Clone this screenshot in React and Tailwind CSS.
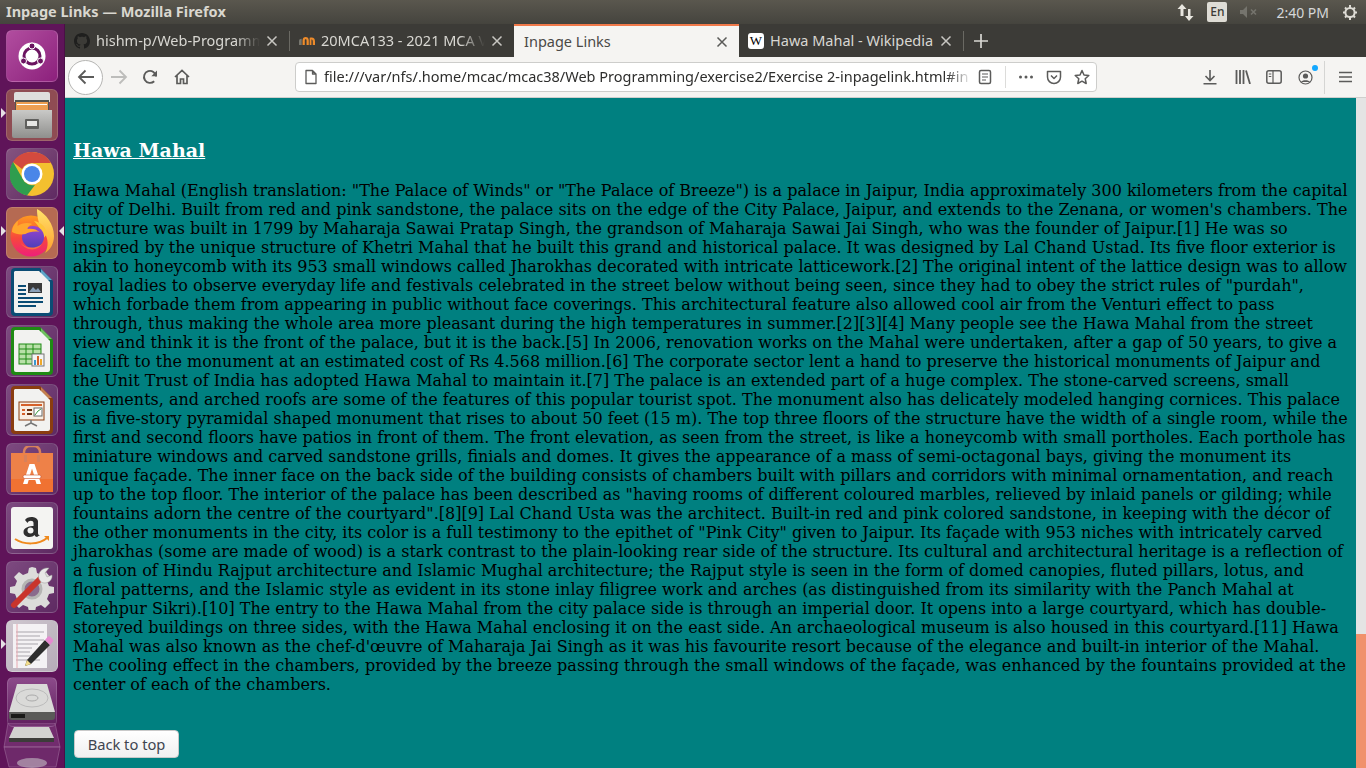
const UI = "font-['Noto_Sans',sans-serif]";

const TEXT = `Hawa Mahal (English translation: "The Palace of Winds" or "The Palace of Breeze") is a palace in Jaipur, India approximately 300 kilometers from the capital city of Delhi. Built from red and pink sandstone, the palace sits on the edge of the City Palace, Jaipur, and extends to the Zenana, or women's chambers. The structure was built in 1799 by Maharaja Sawai Pratap Singh, the grandson of Maharaja Sawai Jai Singh, who was the founder of Jaipur.[1] He was so inspired by the unique structure of Khetri Mahal that he built this grand and historical palace. It was designed by Lal Chand Ustad. Its five floor exterior is akin to honeycomb with its 953 small windows called Jharokhas decorated with intricate latticework.[2] The original intent of the lattice design was to allow royal ladies to observe everyday life and festivals celebrated in the street below without being seen, since they had to obey the strict rules of "purdah", which forbade them from appearing in public without face coverings. This architectural feature also allowed cool air from the Venturi effect to pass through, thus making the whole area more pleasant during the high temperatures in summer.[2][3][4] Many people see the Hawa Mahal from the street view and think it is the front of the palace, but it is the back.[5] In 2006, renovation works on the Mahal were undertaken, after a gap of 50 years, to give a facelift to the monument at an estimated cost of Rs 4.568 million.[6] The corporate sector lent a hand to preserve the historical monuments of Jaipur and the Unit Trust of India has adopted Hawa Mahal to maintain it.[7] The palace is an extended part of a huge complex. The stone-carved screens, small casements, and arched roofs are some of the features of this popular tourist spot. The monument also has delicately modeled hanging cornices. This palace is a five-story pyramidal shaped monument that rises to about 50 feet (15 m). The top three floors of the structure have the width of a single room, while the first and second floors have patios in front of them. The front elevation, as seen from the street, is like a honeycomb with small portholes. Each porthole has miniature windows and carved sandstone grills, finials and domes. It gives the appearance of a mass of semi-octagonal bays, giving the monument its unique façade. The inner face on the back side of the building consists of chambers built with pillars and corridors with minimal ornamentation, and reach up to the top floor. The interior of the palace has been described as "having rooms of different coloured marbles, relieved by inlaid panels or gilding; while fountains adorn the centre of the courtyard".[8][9] Lal Chand Usta was the architect. Built-in red and pink colored sandstone, in keeping with the décor of the other monuments in the city, its color is a full testimony to the epithet of "Pink City" given to Jaipur. Its façade with 953 niches with intricately carved jharokhas (some are made of wood) is a stark contrast to the plain-looking rear side of the structure. Its cultural and architectural heritage is a reflection of a fusion of Hindu Rajput architecture and Islamic Mughal architecture; the Rajput style is seen in the form of domed canopies, fluted pillars, lotus, and floral patterns, and the Islamic style as evident in its stone inlay filigree work and arches (as distinguished from its similarity with the Panch Mahal at Fatehpur Sikri).[10] The entry to the Hawa Mahal from the city palace side is through an imperial door. It opens into a large courtyard, which has double-storeyed buildings on three sides, with the Hawa Mahal enclosing it on the east side. An archaeological museum is also housed in this courtyard.[11] Hawa Mahal was also known as the chef-d'œuvre of Maharaja Jai Singh as it was his favourite resort because of the elegance and built-in interior of the Mahal. The cooling effect in the chambers, provided by the breeze passing through the small windows of the façade, was enhanced by the fountains provided at the center of each of the chambers.`;

const Close = ({ c = "#c8c7c2" }) => (
  <svg width="12" height="12" viewBox="0 0 12 12" className="shrink-0">
    <path d="M1.500 1.500l9 9M10.500 1.500l-9 9" stroke={c} strokeWidth="1.500" />
  </svg>
);

function Tab({ icon, title, active, fade }) {
  return (
    <div className={active
      ? "w-[225px] h-[33px] flex items-center pl-[10px] pr-[11px] bg-[#f5f4f2] border-t-2 border-[#f0794a] shrink-0"
      : "w-[224px] h-[33px] flex items-center pl-[9px] pr-[11px] shrink-0"}>
      {icon}
      <span className={`flex-1 whitespace-nowrap overflow-hidden text-[14.5px] ${active ? "text-[#4a4946]" : "text-[#d8d7d2]"} ${fade ? "[mask-image:linear-gradient(to_right,black_85%,transparent)]" : ""}`}>{title}</span>
      <span className="ml-[6px]"><Close c={active ? "#5a5a58" : "#c8c7c2"} /></span>
    </div>
  );
}

const Sep = () => <div className="w-px h-[20px] bg-[#6a6963] shrink-0" />;

const Github = () => (
  <svg width="16" height="16" viewBox="0 0 16 16" className="mr-[6px] shrink-0" fill="#1f1f1e">
    <path d="M8 0C3.580 0 0 3.580 0 8c0 3.540 2.290 6.530 5.470 7.590.4.070.55-.17.55-.38 0-.19-.01-.82-.01-1.490-2.010.37-2.530-.49-2.690-.94-.09-.23-.48-.94-.82-1.130-.28-.15-.68-.52-.01-.53.63-.01 1.080.58 1.230.82.72 1.210 1.870.87 2.330.66.07-.52.28-.87.51-1.070-1.780-.2-3.640-.89-3.640-3.950 0-.87.31-1.590.82-2.150-.08-.2-.36-1.020.08-2.120 0 0 .67-.21 2.200.82.64-.18 1.320-.27 2-.27s1.360.09 2 .27c1.530-1.040 2.200-.82 2.200-.82.44 1.100.16 1.920.08 2.120.51.56.82 1.270.82 2.150 0 3.070-1.870 3.750-3.650 3.950.29.25.54.73.54 1.480 0 1.070-.01 1.930-.01 2.200 0 .21.15.46.55.38A8.010 8.010 0 0016 8c0-4.420-3.580-8-8-8z" />
  </svg>
);
const Moodle = () => (
  <svg width="16" height="11" viewBox="0 0 18 12" className="mr-[6px] shrink-0">
    <path d="M0 11V6.500C0 5 1 4 3 4v7z" fill="#77776f" />
    <path d="M4 11V6c0-3 1.500-4 3.500-4S11 3 11 6v5H8.500V6c0-1-.3-1.500-1-1.500S6.500 5 6.500 6v5z" fill="#ee8b2a" />
    <path d="M12 11V3c4-1 6 .5 6 4v4h-2.500V7c0-1.500-.7-2-1.500-2v6z" fill="#ee8b2a" />
  </svg>
);
const Wiki = () => (
  <div className="w-[16px] h-[16px] bg-white rounded-[3px] mr-[6px] shrink-0 flex items-center justify-center font-['Liberation_Serif',serif] text-[13px] leading-none text-black">W</div>
);

const IC = "#5b5b5a";

function Toolbar() {
  return (
    <div className="h-[40px] bg-[#f5f4f2] flex items-center shrink-0">
      <div className="w-[35px] h-[35px] ml-[3px] rounded-full border border-[#b5b5b3] bg-white flex items-center justify-center shrink-0">
        <svg width="18" height="16" viewBox="0 0 18 16" fill="none" stroke={IC} strokeWidth="1.800"><path d="M17 8H2M8.500 1.500L2 8l6.500 6.500" /></svg>
      </div>
      <svg width="18" height="16" viewBox="0 0 18 16" fill="none" stroke="#bdbdbb" strokeWidth="1.800" className="ml-[7px] shrink-0"><path d="M1 8h15M9.500 1.500L16 8l-6.500 6.500" /></svg>
      <svg width="16" height="16" viewBox="0 0 16 16" fill="none" stroke={IC} strokeWidth="1.900" className="ml-[14px] shrink-0"><path d="M14 7.500A6 6 0 1 0 12.200 12.200" /><path d="M15 1.500v5.700H9.300z" fill={IC} stroke="none" /></svg>
      <svg width="16" height="16" viewBox="0 0 16 16" fill="none" stroke={IC} strokeWidth="1.700" className="ml-[16px] shrink-0"><path d="M1 8l7-6.500L15 8M3 6.500V14.500h3.500V10h3v4.500H13V6.500" /></svg>
      <div className="ml-[105px] w-[802px] h-[30px] bg-white border border-[#cdcdcb] rounded-[4px] flex items-center pl-[8px] shrink-0">
        <svg width="14" height="16" viewBox="0 0 14 16" fill="none" stroke={IC} strokeWidth="1.300" className="shrink-0"><path d="M2 1.500h6.500L12 5v9.500H2zM8.500 1.500V5H12" strokeLinejoin="round" /></svg>
        <span className="ml-[6px] w-[648px] whitespace-nowrap overflow-hidden text-[14.5px] text-[#2e2e2d] [mask-image:linear-gradient(to_right,black_96%,transparent)]">file:///var/nfs/.home/mcac/mcac38/Web Programming/exercise2/Exercise 2-inpagelink.html#in</span>
        <svg width="14" height="16" viewBox="0 0 14 16" fill="none" stroke={IC} strokeWidth="1.500" className="ml-[6px] shrink-0"><rect x="1.500" y="1.500" width="11" height="13" rx="1.500" /><path d="M4 5h6M4 8h6M4 11h4" strokeWidth="1.100" /></svg>
        <div className="w-px h-[22px] bg-[#dcdcda] ml-[13px] shrink-0" />
        <svg width="16" height="4" viewBox="0 0 16 4" fill={IC} className="ml-[12px] shrink-0"><circle cx="2.500" cy="2" r="1.500" /><circle cx="8" cy="2" r="1.500" /><circle cx="13.500" cy="2" r="1.500" /></svg>
        <svg width="16" height="15" viewBox="0 0 16 15" fill="none" stroke={IC} strokeWidth="1.500" className="ml-[12px] shrink-0"><path d="M1.500 1.500h13v5.500a6.500 6.500 0 0 1-13 0zM5 5.500l3 3 3-3" strokeLinejoin="round" /></svg>
        <svg width="16" height="16" viewBox="0 0 16 16" fill="none" stroke={IC} strokeWidth="1.500" className="ml-[12px] shrink-0"><path d="M8 1.500l2 4.500 4.800.5-3.600 3.200 1 4.800L8 12.200l-4.200 2.300 1-4.800L1.200 6.500 6 6z" strokeLinejoin="round" /></svg>
      </div>
      <svg width="16" height="16" viewBox="0 0 16 16" fill="none" stroke={IC} strokeWidth="1.600" className="ml-[105px] shrink-0"><path d="M8 1v10M3.500 7L8 11.500 12.500 7M1.500 14.800h13" /></svg>
      <svg width="16" height="14" viewBox="0 0 16 14" fill="none" stroke={IC} strokeWidth="1.800" className="ml-[17px] shrink-0"><path d="M1.500 0v14M5 0v14M8.500 0v14M11 .5l4 13.500" /></svg>
      <svg width="16" height="14" viewBox="0 0 16 14" fill="none" stroke={IC} strokeWidth="1.500" className="ml-[15px] shrink-0"><rect x=".8" y=".8" width="14.400" height="12.400" rx="2" /><path d="M7 1v12M2.800 4h2.500M2.800 6.500h2.500" strokeWidth="1.200" /></svg>
      <div className="relative ml-[16px] shrink-0 w-[15px] h-[15px] flex items-center">
        <svg width="15" height="15" viewBox="0 0 15 15" fill="none" stroke={IC} strokeWidth="1.200" className="shrink-0"><circle cx="7.500" cy="7.500" r="6.500" /><circle cx="7.500" cy="6" r="2.600" fill={IC} stroke="none" /><path d="M3 12c1-2.500 8-2.500 9 0" fill={IC} stroke="none" /></svg>
        <div className="absolute right-[-5px] top-[-5px] w-[6px] h-[6px] rounded-full bg-[#14a8ff]" />
      </div>
      <div className="w-px h-[33px] bg-[#d5d5d3] ml-[11px] shrink-0" />
      <svg width="13" height="12" viewBox="0 0 13 12" stroke={IC} strokeWidth="1.600" className="ml-[14px] shrink-0"><path d="M0 1.500h13M0 6h13M0 10.500h13" /></svg>
    </div>
  );
}

function TitleBar() {
  return (
    <div className={`h-[24px] shrink-0 bg-gradient-to-b from-[#5a574e] to-[#45443e] flex items-center pl-[6px] ${UI}`}>
      <span className="text-[14.5px] font-bold text-[#d9d7cf] whitespace-nowrap">Inpage Links — Mozilla Firefox</span>
      <div className="flex-1" />
      <svg width="18" height="17" viewBox="0 0 18 17" fill="#e8e6df" className="shrink-0"><path d="M4.500 0L9 5H6v7H3V5H0zM13 5v7h3l-4.500 5L7.500 12h3V5z" transform="translate(.5 0)" /></svg>
      <div className="w-[20px] h-[20px] ml-[12px] bg-[#dedcd5] rounded-[2px] flex items-center justify-center text-[12px] text-[#3c3b37] font-medium shrink-0">En</div>
      <svg width="18" height="12" viewBox="0 0 18 12" fill="#75746d" className="ml-[13px] shrink-0"><path d="M0 4h3l4-4v12l-4-4H0z" /><path d="M11 3.500l5 5M16 3.500l-5 5" stroke="#75746d" strokeWidth="1.600" /></svg>
      <span className="ml-[18px] text-[14px] text-[#d5d7d8] whitespace-nowrap">2:40 PM</span>
      <svg width="16" height="16" viewBox="0 0 16 16" fill="none" stroke="#dedcd5" strokeWidth="2" className="ml-[13px] mr-[8px] shrink-0"><circle cx="8" cy="8.500" r="4.600" /><path d="M8 1v4M8 13v3M1 8.500h2.500M12.500 8.500H15M3 3.500l1.500 1.500M11.500 12l1.500 1.500M13 3.500L11.500 5M4.500 12L3 13.500" /></svg>
    </div>
  );
}

function Tile({ bg, children, marks }) {
  return (
    <div className={`w-[52px] h-[52px] rounded-[6px] shrink-0 relative border border-white/15 ${bg}`}>
      {marks}
      <div className="absolute inset-[-1px] flex items-center justify-center">{children}</div>
    </div>
  );
}
const LMark = () => <div className="absolute left-[-6px] top-[18px] w-0 h-0 border-y-[5px] border-y-transparent border-l-[5px] border-l-[#e6e0e4]" />;
const RMark = () => <div className="absolute right-[-7px] top-[18px] w-0 h-0 border-y-[5px] border-y-transparent border-r-[5px] border-r-[#e6e0e4]" />;

const LoDoc = ({ edge, corner, children }) => (
  <svg width="42" height="48" viewBox="0 0 42 48">
    <path d="M4 0h25l13 13v31a4 4 0 0 1-4 4H4a4 4 0 0 1-4-4V4a4 4 0 0 1 4-4z" fill={edge} />
    <path d="M30 1l11 11H30z" fill={corner} />
    <path d="M4 3h24l11 11v29a2 2 0 0 1-2 2H5a2 2 0 0 1-2-2V4z" fill="#f2f2f0" />
    {children}
  </svg>
);

function Dock() {
  return (
    <div className="w-[65px] bg-[#5f1459] shrink-0 flex flex-col items-center gap-[7px] pt-[6px] border-r border-[#4a1046] overflow-hidden">
      <Tile bg="bg-gradient-to-br from-[#b14d9f] to-[#8c1f7c]">
        <svg width="34" height="34" viewBox="0 0 34 34">
          <circle cx="17" cy="17" r="13.500" fill="#fff" />
          <circle cx="17" cy="17" r="8" fill="none" stroke="#6b1460" strokeWidth="3" />
          <circle cx="17" cy="7" r="3" fill="#6b1460" stroke="#fff" />
          <circle cx="8.500" cy="22" r="3" fill="#6b1460" stroke="#fff" />
          <circle cx="25.500" cy="22" r="3" fill="#6b1460" stroke="#fff" />
        </svg>
      </Tile>
      <Tile bg="bg-[#8f4c53]" marks={<LMark />}>
        <svg width="40" height="46" viewBox="0 0 40 46">
          <defs><linearGradient id="cab" x1="0" y1="0" x2="0" y2="1"><stop offset="0" stopColor="#c9c9c7" /><stop offset="1" stopColor="#8f8f8d" /></linearGradient></defs>
          <path d="M2 2a2 2 0 0 1 2-2h32a2 2 0 0 1 2 2v8H2z" fill="#dededc" />
          <rect x="3" y="8" width="34" height="10" fill="#55534e" />
          <rect x="4" y="10" width="32" height="8" fill="#ed9f52" />
          <rect x="5" y="12" width="30" height="1" fill="#fff" />
          <path d="M0 18h40v26a2 2 0 0 1-2 2H2a2 2 0 0 1-2-2z" fill="url(#cab)" />
          <rect x="13" y="27" width="14" height="10" rx="1" fill="#5f5f5d" />
          <rect x="15" y="29" width="10" height="5" fill="#e6e6e4" />
        </svg>
      </Tile>
      <Tile bg="bg-gradient-to-br from-[#84537f] to-[#5f2a62]">
        <svg width="44" height="44" viewBox="0 0 44 44">
          <circle cx="22" cy="22" r="22" fill="#f3c02f" />
          <path d="M22 0a22 22 0 0 1 19 11H22a11 11 0 0 0-10 6L3 10A22 22 0 0 1 22 0z" fill="#d34a3e" />
          <path d="M3 10l9.500 16.500A11 11 0 0 0 25 33L17 43.500A22 22 0 0 1 3 10z" fill="#2f9d4e" />
          <circle cx="22" cy="22" r="10.500" fill="#fff" />
          <circle cx="22" cy="22" r="8" fill="#4a86e8" />
        </svg>
      </Tile>
      <Tile bg="bg-[#b56a52]" marks={<><LMark /><RMark /></>}>
        <svg width="46" height="48" viewBox="0 0 46 48">
          <defs>
            <linearGradient id="fxo" x1="0" y1="0" x2="0" y2="1"><stop offset="0" stopColor="#ff9a1f" /><stop offset=".55" stopColor="#f7483c" /><stop offset="1" stopColor="#ee1f7a" /></linearGradient>
            <linearGradient id="fxy" x1="0" y1="0" x2="0" y2="1"><stop offset="0" stopColor="#ffe36a" /><stop offset="1" stopColor="#ff9f2e" /></linearGradient>
            <linearGradient id="fxp" x1="0" y1="0" x2="0" y2="1"><stop offset="0" stopColor="#9a45d0" /><stop offset="1" stopColor="#4f3fb8" /></linearGradient>
          </defs>
          <circle cx="22" cy="27" r="20.500" fill="url(#fxo)" />
          <path d="M28 0c9 5 17 15 17 27 0 8-4 14-9 17 4-7 3-14 0-19-1-4-8-8-8-25z" fill="url(#fxy)" />
          <path d="M25 12c7 1 12 6 13 13l-5 6c0-8-3-14-8-19z" fill="#ffc53a" />
          <circle cx="24" cy="28" r="11" fill="url(#fxp)" />
          <path d="M3 23c0-5 3-9 6-11l-.5 5c4-3 10-4 15-2-3 1-5 3-5 5 4-1 9 0 12 3-5-1-11 0-14 2-5 1-10 0-13.500-2z" fill="#ffa62e" />
          <path d="M11 33c4 6 14 8 22 2-4 7-16 8-22-2z" fill="#ff7a3a" fillOpacity=".8" />
        </svg>
      </Tile>
      <Tile bg="bg-gradient-to-br from-[#7d4a80] to-[#5e2a62]">
        <LoDoc edge="#0b4c74" corner="#5ea4c8">
          <rect x="7" y="17" width="8" height="2" fill="#0b4c74" /><rect x="7" y="21" width="8" height="2" fill="#0b4c74" /><rect x="7" y="25" width="8" height="2" fill="#0b4c74" />
          <rect x="17" y="15" width="14" height="10" fill="#3a3a3a" />
          <path d="M18 24l4-5 3 3 2-2 3 4z" fill="#8aa0b8" />
          <rect x="7" y="29" width="25" height="2" fill="#0b4c74" /><rect x="7" y="33" width="25" height="2" fill="#0b4c74" /><rect x="7" y="37" width="18" height="2" fill="#0b4c74" />
        </LoDoc>
      </Tile>
      <Tile bg="bg-gradient-to-br from-[#7d4a80] to-[#5e2a62]">
        <LoDoc edge="#1f8a14" corner="#6fc060">
          <rect x="8" y="17" width="22" height="20" fill="#b8e0a8" stroke="#1f8a14" />
          <path d="M8 22h22M8 27h22M8 32h22M15 17v20M22 17v20" stroke="#1f8a14" />
          <rect x="21" y="27" width="12" height="12" fill="#f4f4f4" stroke="#777" />
          <rect x="23" y="33" width="2" height="5" fill="#3a96d0" /><rect x="26" y="29" width="2" height="9" fill="#d5602a" /><rect x="29" y="32" width="2" height="6" fill="#eea92a" />
        </LoDoc>
      </Tile>
      <Tile bg="bg-gradient-to-br from-[#7d4a80] to-[#5e2a62]">
        <LoDoc edge="#8a3d10" corner="#c48050">
          <rect x="8" y="16" width="25" height="18" fill="#f9eee2" stroke="#8a3d10" />
          <rect x="10" y="18" width="21" height="2" fill="#d5602a" />
          <rect x="11" y="23" width="3" height="2" fill="#d5602a" /><rect x="16" y="23" width="5" height="2" fill="#6a3010" />
          <rect x="11" y="27" width="3" height="2" fill="#d5602a" /><rect x="16" y="27" width="5" height="2" fill="#6a3010" />
          <rect x="23" y="22" width="8" height="8" fill="#fff" stroke="#666" /><path d="M24 29l3-4 3-2" stroke="#3a9a40" fill="none" />
          <path d="M20 34v3M20 37l-6 3M20 37l6 3" stroke="#777" strokeWidth="1.500" />
        </LoDoc>
      </Tile>
      <Tile bg="bg-gradient-to-br from-[#7d4a80] to-[#5e2a62]">
        <svg width="42" height="46" viewBox="0 0 42 46">
          <path d="M13 9V6a6 6 0 0 1 6-6h4a6 6 0 0 1 6 6v3" fill="none" stroke="#d8815a" strokeWidth="2.500" />
          <path d="M0 7h42v39H0z" fill="#ee8148" />
          <rect x="0" y="33" width="42" height="13" fill="#f07232" />
          <path d="M13 9h3v7h-3zM26 9h3v7h-3z" fill="#d8815a" />
          <path d="M12 38l6.500-20h5L30 38h-4.500l-1.200-4h-6.600l-1.200 4zM18.700 30h4.600L21 22.500z" fill="#fff" />
          <rect x="12" y="29" width="18" height="3.500" rx="1.700" fill="#fff" stroke="#c8502a" strokeWidth=".6" />
        </svg>
      </Tile>
      <Tile bg="bg-gradient-to-br from-[#7d4a80] to-[#5e2a62]">
        <svg width="42" height="42" viewBox="0 0 42 42">
          <rect width="42" height="42" rx="3" fill="#f4f4f2" />
          <path d="M14 13c2-4 12-4 13 1v12c0 2 1 2 2 2l-3 2c-1 0-2-1-2.500-2-2 3-11 3-11-3 0-5 7-6 10-6v-3c0-3-5-3-6 0z" fill="#2f2f2f" />
          <circle cx="19.500" cy="23.500" r="3" fill="#f4f4f2" />
          <path d="M4 32c9 6 24 6 32-1" stroke="#ef8a1e" strokeWidth="2" fill="none" />
          <path d="M33 29h5v5z" fill="#ef8a1e" />
        </svg>
      </Tile>
      <Tile bg="bg-gradient-to-br from-[#7d4a80] to-[#5e2a62]">
        <svg width="46" height="46" viewBox="0 0 46 46">
          <path d="M23 3l4 1 1 5 5 2 4-3 4 5-3 4 2 5 5 1v6l-5 1-2 5 3 4-5 5-4-3-5 2-1 5h-6l-1-5-5-2-4 3-5-5 3-4-2-5-5-1v-6l5-1 2-5-3-4 5-5 4 3 5-2 1-5z" fill="#dcdcda" />
          <circle cx="23" cy="25" r="9" fill="#8a6a8c" stroke="#b5b5b3" strokeWidth="3" />
          <path d="M5 41L32 14" stroke="#c9352c" strokeWidth="6" strokeLinecap="round" />
          <path d="M30 15c-2-6 3-12 10-11l-4 5 2 4 5-2c1 6-6 10-11 7z" fill="#e8e8e6" stroke="#999" strokeWidth=".5" />
        </svg>
      </Tile>
      <Tile bg="bg-gradient-to-br from-[#cfc7cf] to-[#b6acb8]" marks={<LMark />}>
        <svg width="42" height="44" viewBox="0 0 42 44">
          <rect x="2" y="0" width="34" height="44" fill="#f4f2f4" />
          <path d="M5 8h28M5 12h24M5 16h28M5 20h22M5 24h16M5 28h14M5 32h20M5 36h24" stroke="#a9a6ac" strokeWidth="1" />
          <path d="M6 0v44" stroke="#e8a8b0" />
          <path d="M16 36L34 16l5 5-19 19-6 2z" fill="#2e2e2e" />
          <path d="M34 16l2.500-3a2 2 0 0 1 3 0l2 2a2 2 0 0 1 0 3L39 21z" fill="#e58ad0" />
          <path d="M16 36l4 4-6 2z" fill="#f3dc8a" />
        </svg>
      </Tile>
      <div className="w-[65px] shrink-0 mt-[-2px]">
        <div className="w-[50px] h-[50px] mx-auto rounded-[6px] border border-white/15 bg-gradient-to-b from-[#8c4a8a] to-[#5f1e5e] flex items-center justify-center">
          <svg width="46" height="36" viewBox="0 0 46 36">
            <path d="M8 0h30l8 28H0z" fill="#dadad8" />
            <ellipse cx="23" cy="14" rx="16" ry="9" fill="none" stroke="#bbb" />
            <ellipse cx="23" cy="14" rx="6" ry="3" fill="none" stroke="#aaa" />
            <path d="M0 28h46v5a3 3 0 0 1-3 3H3a3 3 0 0 1-3-3z" fill="#5a5a58" />
            <rect x="2" y="30" width="14" height="4" fill="#1a1a18" />
          </svg>
        </div>
        <svg width="65" height="45" viewBox="0 0 65 45" className="block mt-[-4px]">
          <path d="M8 0h47l5 24H4z" fill="#8a4a88" fillOpacity=".45" stroke="#a87aa6" strokeWidth=".5" />
          <path d="M14 4h35l5 11H9z" fill="#d2d2d0" />
          <path d="M9 15h45v4H9z" fill="#3c3c3a" />
          <path d="M4 24h56l-4 20H9z" fill="#7a3a78" fillOpacity=".55" stroke="#a87aa6" strokeWidth=".5" />
          <ellipse cx="32" cy="40" rx="15" ry="5" fill="#b8a8b8" fillOpacity=".7" />
        </svg>
      </div>
    </div>
  );
}

export default function App() {
  return (
    <div className="w-[1366px] h-[768px] overflow-hidden flex flex-col">
      <TitleBar />
      <div className="flex flex-1 min-h-0">
        <Dock />
        <div className="flex-1 min-w-0 flex flex-col">
          <div className={`h-[33px] bg-[#3c3b37] flex items-center shrink-0 ${UI}`}>
            <Tab icon={<Github />} title="hishm-p/Web-Programm" fade />
            <Sep />
            <Tab icon={<Moodle />} title="20MCA133 - 2021 MCA V" fade />
            <Tab active title="Inpage Links" />
            <Tab icon={<Wiki />} title="Hawa Mahal - Wikipedia" />
            <Sep />
            <svg width="14" height="14" viewBox="0 0 14 14" stroke="#d8d7d2" strokeWidth="1.700" className="ml-[10px]"><path d="M7 0v14M0 7h14" /></svg>
          </div>
          <div className={UI}><Toolbar /></div>
          <div className="h-px bg-[#cfcfcd] shrink-0" />
          <div className="flex-1 min-h-0 flex">
            <main className="flex-1 min-w-0 bg-[#008080] px-2 overflow-hidden font-['DejaVu_Serif',serif] text-black">
              <h2 className="mt-[41px] text-[19px] leading-[23px] font-bold underline text-white">Hawa Mahal</h2>
              <p className="mt-[19px] text-[16px] leading-[19px]">{TEXT}</p>
              <button className={`mt-[36px] ml-px w-[105px] h-[28px] rounded-[4px] border border-[#c9c9c9] bg-gradient-to-b from-white to-[#f0f0f0] text-[14.7px] text-[#3f4550] ${UI}`}>Back to top</button>
            </main>
            <div className="w-[10px] bg-[#e4e4e4] flex flex-col shrink-0">
              <div className="flex-1" />
              <div className="h-[134px] bg-[#f0916c]" />
            </div>
          </div>
        </div>
      </div>
    </div>
  );
}
